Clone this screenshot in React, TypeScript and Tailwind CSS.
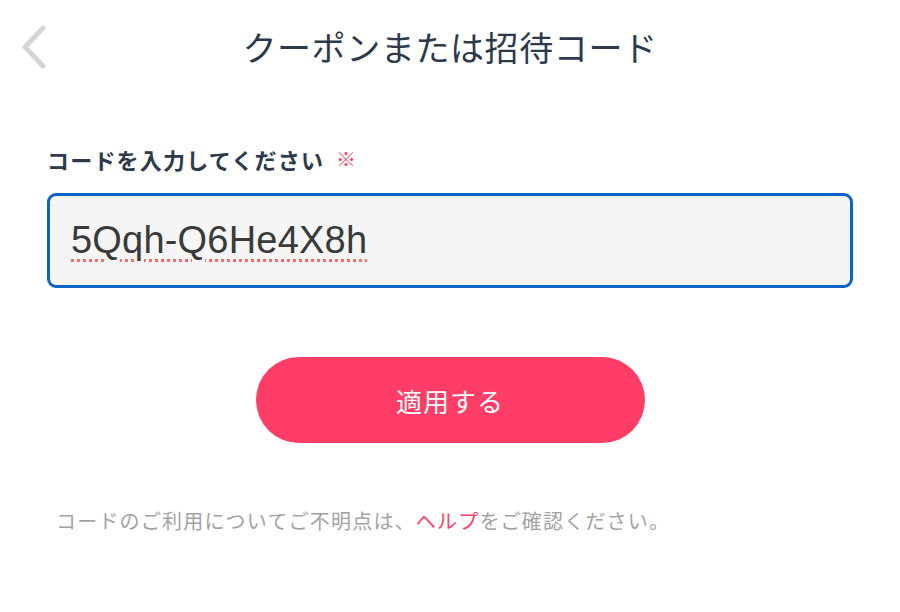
import { useState } from "react";

function BackChevron() {
  return (
    <svg width="28" height="46" viewBox="0 0 28 46" fill="none">
      <path
        d="M23 4 L5 23 L23 42"
        stroke="#d3d5d9"
        strokeWidth="5"
        strokeLinecap="round"
        strokeLinejoin="round"
      />
    </svg>
  );
}

export default function App() {
  const [code, setCode] = useState("5Qqh-Q6He4X8h");

  return (
    <div
      className="min-h-screen bg-white text-[#2c3a4b]"
      style={{ fontFamily: '"Noto Sans CJK JP", "Noto Sans", sans-serif' }}
    >
      <header className="grid h-[94px] grid-cols-[90px_1fr_90px] items-center">
        <button className="flex h-full items-center pl-[20px]">
          <BackChevron />
        </button>
        <h1 className="text-center text-[34px] font-normal leading-none tracking-[0.6px]">
          クーポンまたは招待コード
        </h1>
        <div />
      </header>

      <main className="px-[47px]">
        <label className="mt-[50px] flex items-center gap-[12px] text-[22px] font-bold leading-[30px] tracking-[1.2px]">
          コードを入力してください
          <span className="text-[20px] font-normal text-[#ff3d66]">※</span>
        </label>

        <div className="mt-[19px] flex h-[95px] items-center rounded-[9px] border-[3px] border-[#0a64c9] bg-[#f5f5f5] px-[21px]">
          <input
            value={code}
            onChange={(e) => setCode(e.target.value)}
            className="w-full bg-transparent text-[38px] tracking-[0.2px] text-[#3a3a3a] underline decoration-[#ff6b6b] decoration-dotted decoration-[3px] underline-offset-[6px] outline-none"
            style={{ fontFamily: '"Liberation Sans", Arial, sans-serif' }}
          />
        </div>

        <div className="mt-[69px] flex justify-center">
          <button className="h-[86px] w-[389px] rounded-full bg-[#ff3d66] text-[26px] tracking-[1px] text-white">
            適用する
          </button>
        </div>

        <p className="mt-[64px] pl-[9px] text-[20px] leading-[28px] tracking-[1.2px] text-[#a3a3a3]">
          コードのご利用についてご不明点は、
          <a className="text-[#ff3d66]">ヘルプ</a>
          をご確認ください。
        </p>
      </main>
    </div>
  );
}
